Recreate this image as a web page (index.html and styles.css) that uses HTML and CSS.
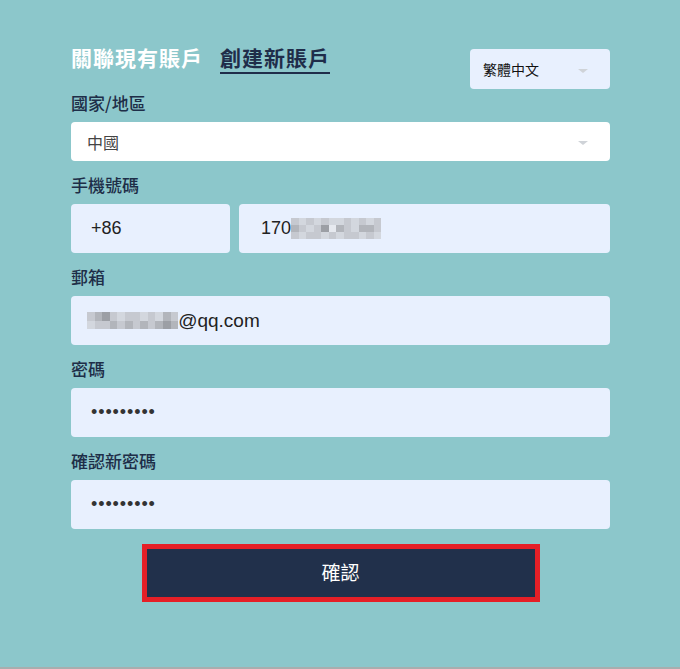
FILE: index.html
```html
<!DOCTYPE html>
<html lang="zh-Hant">
<head>
    <meta charset="UTF-8">
    <meta name="viewport" content="width=device-width, initial-scale=1.0">
    <title>創建新賬戶</title>
    <link rel="stylesheet" href="styles.css">
</head>
<body>
    <div class="page">
        <div class="panel">
            <div class="header">
                <div class="tabs">
                    <span class="tab">關聯現有賬戶</span>
                    <span class="tab active">創建新賬戶</span>
                </div>
                <div class="select lang">繁體中文<span class="caret"></span></div>
            </div>

            <div class="field">
                <div class="label">國家/地區</div>
                <div class="select country">中國<span class="caret"></span></div>
            </div>

            <div class="field">
                <div class="label">手機號碼</div>
                <div class="phone-row">
                    <div class="input">+86</div>
                    <div class="input phone">170<span class="mosaic tall">
                        <i class="m2"></i><i class="m1"></i><i class="m2"></i><i class="m1"></i><i class="m2"></i><i class="m1"></i><i class="m1"></i><i class="m2"></i><i class="m1"></i><i class="m2"></i><i class="m1"></i><i class="m2"></i>
                        <i class="m3"></i><i class="m2"></i><i class="m1"></i><i class="m2"></i><i class="m4"></i><i class="m0"></i><i class="m3"></i><i class="m2"></i><i class="m1"></i><i class="m3"></i><i class="m3"></i><i class="m2"></i>
                        <i class="m2"></i><i class="m1"></i><i class="m2"></i><i class="m2"></i><i class="m1"></i><i class="m2"></i><i class="m1"></i><i class="m2"></i><i class="m2"></i><i class="m1"></i><i class="m2"></i><i class="m1"></i>
                    </span></div>
                </div>
            </div>

            <div class="field">
                <div class="label">郵箱</div>
                <div class="input email"><span class="mosaic">
                    <i class="m2"></i><i class="m3"></i><i class="m4"></i><i class="m2"></i><i class="m1"></i><i class="m2"></i><i class="m2"></i><i class="m1"></i><i class="m2"></i><i class="m1"></i><i class="m3"></i><i class="m2"></i>
                    <i class="m1"></i><i class="m2"></i><i class="m2"></i><i class="m3"></i><i class="m2"></i><i class="m3"></i><i class="m2"></i><i class="m3"></i><i class="m2"></i><i class="m3"></i><i class="m4"></i><i class="m3"></i>
                </span>@qq.com</div>
            </div>

            <div class="field">
                <div class="label">密碼</div>
                <div class="input secret">•••••••••</div>
            </div>

            <div class="field">
                <div class="label">確認新密碼</div>
                <div class="input secret">•••••••••</div>
            </div>

            <button class="confirm" type="button">確認</button>
        </div>
    </div>
</body>
</html>
```

FILE: styles.css
```css
body {
    margin: 0;
    background-color: #8cc7cb;
    font-family: "Noto Sans CJK TC", "Liberation Sans", sans-serif;
}
.page {
    height: 667px;
    border-bottom: 2px solid #a8aeae;
}
.panel {
    width: 539px;
    margin-left: 71px;
    padding-top: 44px;
}
.header {
    display: flex;
    justify-content: space-between;
    align-items: flex-start;
    margin-bottom: 2px;
}
.tabs {
    display: flex;
    gap: 17px;
}
.tab {
    font-size: 21px;
    font-weight: 700;
    line-height: 26px;
    letter-spacing: 1px;
    color: #ffffff;
    padding-bottom: 2px;
    border-bottom: 2px solid transparent;
}
.tab.active {
    color: #1f2d4a;
    border-bottom-color: #1f2d4a;
}
.select {
    display: flex;
    align-items: center;
    border-radius: 4px;
    box-sizing: border-box;
}
.caret {
    width: 0;
    height: 0;
    margin-left: auto;
    margin-top: 3px;
    border-top: 4px solid #cfd3d8;
    border-left: 5px solid transparent;
    border-right: 5px solid transparent;
}
.lang {
    width: 140px;
    height: 40px;
    margin-top: 5px;
    padding: 0 22px 0 13px;
    background-color: #e8f0fe;
    font-size: 14px;
    color: #111111;
}
.country {
    height: 39px;
    padding: 0 22px 0 16px;
    background-color: #ffffff;
    font-size: 16px;
    color: #444444;
}
.field + .field {
    margin-top: 12px;
}
.label {
    font-size: 17px;
    font-weight: 500;
    line-height: 24px;
    color: #1e2e48;
    margin-bottom: 7px;
}
.phone-row {
    display: grid;
    grid-template-columns: 159px 1fr;
    gap: 9px;
}
.input {
    display: flex;
    align-items: center;
    height: 49px;
    padding-left: 20px;
    background-color: #e8f0fe;
    border-radius: 4px;
    font-family: "Liberation Sans", Arial, sans-serif;
    font-size: 18px;
    color: #222222;
}
.phone {
    padding-left: 22px;
}
.email {
    padding-left: 16px;
    font-size: 19px;
}
.secret {
    font-size: 18px;
    letter-spacing: 0.9px;
    color: #333333;
}
.mosaic {
    display: inline-grid;
    grid-template-columns: repeat(12, 7.6px);
    grid-auto-rows: 8.5px;
}
.mosaic.tall {
    grid-auto-rows: 7.3px;
    grid-template-columns: repeat(12, 7.5px);
}
.mosaic i { display: block; }
.m0 { background-color: #e6e9ef; }
.m1 { background-color: #d3d7de; }
.m2 { background-color: #c6c9d0; }
.m3 { background-color: #b2b5bb; }
.m4 { background-color: #9c9fa5; }
.confirm {
    display: block;
    width: 398px;
    height: 58px;
    margin: 15px auto 0;
    padding: 0 0 4px;
    border: 5px solid #e51f27;
    background-color: #21304b;
    color: #ffffff;
    font-family: "Noto Sans CJK TC", sans-serif;
    font-size: 19px;
    cursor: pointer;
}
```
